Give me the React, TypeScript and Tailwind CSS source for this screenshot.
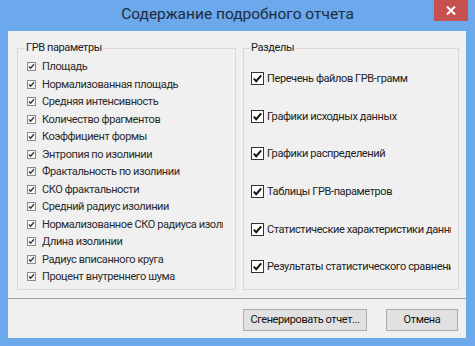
import React from "react";

const leftItems = [
  "Площадь",
  "Нормализованная площадь",
  "Средняя интенсивность",
  "Количество фрагментов",
  "Коэффициент формы",
  "Энтропия по изолинии",
  "Фрактальность по изолинии",
  "СКО фрактальности",
  "Средний радиус изолинии",
  "Нормализованное СКО радиуса изолинии",
  "Длина изолинии",
  "Радиус вписанного круга",
  "Процент внутреннего шума",
];

const rightItems = [
  "Перечень файлов ГРВ-грамм",
  "Графики исходных данных",
  "Графики распределений",
  "Таблицы ГРВ-параметров",
  "Статистические характеристики данных",
  "Результаты статистического сравнения",
];

function SmallCheck() {
  return (
    <svg width="9" height="9" viewBox="0 0 9 9" className="shrink-0">
      <rect x="0.5" y="0.5" width="8" height="8" fill="#fafafa" stroke="#8a8a8a" />
      <path d="M2 4.5 L3.6 6.2 L7 2.3" fill="none" stroke="#333" strokeWidth="1.3" />
    </svg>
  );
}

function BigCheck() {
  return (
    <svg width="13" height="13" viewBox="0 0 13 13" className="shrink-0">
      <rect x="0.5" y="0.5" width="12" height="12" fill="#ffffff" stroke="#333333" />
      <path d="M2.8 6.6 L5.2 9.2 L10.2 3.4" fill="none" stroke="#111" strokeWidth="1.9" />
    </svg>
  );
}

export default function App() {
  return (
    <div
      className="relative w-[475px] h-[346px] bg-[#6ba8ec] flex flex-col"
      style={{ fontFamily: 'Roboto, "Noto Sans", sans-serif' }}
    >
      <div className="h-[31px] flex items-center justify-center text-[15.5px] text-[#1e2b3c] pb-[1px]">
        Содержание подробного отчета
      </div>
      <div className="absolute right-[7px] top-0 w-[34px] h-[21px] bg-[#c75050] flex items-center justify-center">
        <svg width="10" height="9" viewBox="0 0 10 9">
          <path d="M1 0.5 L9 8.5 M9 0.5 L1 8.5" stroke="#fff" strokeWidth="2" />
        </svg>
      </div>
      <div className="ml-[8px] mr-[9px] h-[307px] bg-[#f0f0f0] flex flex-col text-[11px] tracking-[-0.4px] text-[#222]">
        <div className="flex pt-[17px] pl-[9px] pr-[8px] gap-[7px]">
          <div className="relative w-[219px] h-[242px] border border-[#d9d9d9]">
            <span className="absolute left-[7px] top-[-10px] px-[1px] bg-[#f0f0f0] leading-[18px] text-[#222]">
              ГРВ параметры
            </span>
            <div className="flex flex-col pt-[9px] pl-[9px] pr-[12px]">
              {leftItems.map((t) => (
                <div key={t} className="h-[17.5px] flex items-center gap-[6px] overflow-hidden">
                  <SmallCheck />
                  <span className="whitespace-nowrap text-[#2a2a2a] leading-none">{t}</span>
                </div>
              ))}
            </div>
          </div>
          <div className="relative w-[216px] h-[242px] border border-[#d9d9d9]">
            <span className="absolute left-[6px] top-[-10px] px-[1px] bg-[#f0f0f0] leading-[18px]">
              Разделы
            </span>
            <div className="flex flex-col pt-[23px] pl-[7px] pr-[7px] gap-[24.7px]">
              {rightItems.map((t) => (
                <div key={t} className="h-[13px] flex items-center gap-[3px] overflow-hidden">
                  <BigCheck />
                  <span className="whitespace-nowrap leading-none">{t}</span>
                </div>
              ))}
            </div>
          </div>
        </div>
        <div className="mt-[8px] h-[1px] bg-[#a0a0a0]" />
        <div className="mt-[10px] flex justify-end pr-[8px] gap-[19px]">
          <button className="w-[124px] h-[22px] border border-[#acacac] bg-[#e1e1e1] text-[11px] text-[#111] whitespace-nowrap flex items-center justify-center">
            Сгенерировать отчет...
          </button>
          <button className="w-[72px] h-[22px] border border-[#acacac] bg-[#e1e1e1] text-[11px] text-[#111] whitespace-nowrap flex items-center justify-center">
            Отмена
          </button>
        </div>
      </div>
    </div>
  );
}
